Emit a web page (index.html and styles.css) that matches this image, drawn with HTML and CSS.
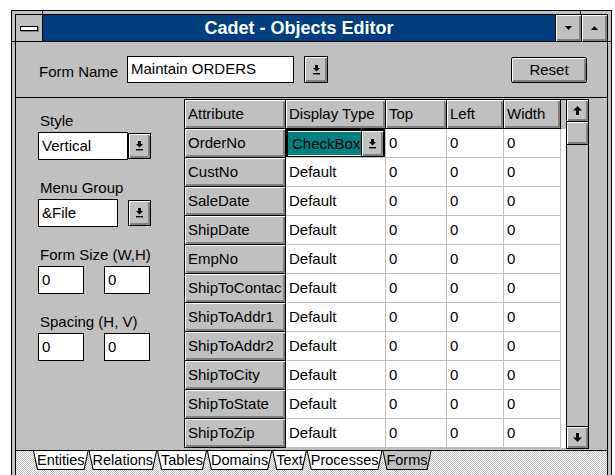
FILE: index.html
```html
<!DOCTYPE html>
<html>
<head>
<meta charset="utf-8">
<title>Cadet - Objects Editor</title>
<link rel="stylesheet" href="styles.css">
</head>
<body>
<div class="window">
  <span class="notch notch-tl"></span>
  <span class="notch notch-tr"></span>
  <span class="notch notch-lt"></span>
  <span class="notch notch-rt"></span>
  <div class="client">
    <div class="titlebar">
      <div class="sysmenu"><span class="sysbar"></span></div>
      <div class="caption">Cadet - Objects Editor</div>
      <div class="tbtn"><svg width="7" height="4" viewBox="0 0 7 4"><polygon points="0,0 7,0 3.5,4" fill="#000"/></svg></div>
      <div class="tbtn"><svg width="7" height="4" viewBox="0 0 7 4"><polygon points="0,4 7,4 3.5,0" fill="#000"/></svg></div>
    </div>

    <div class="formrow">
      <span class="fr-label">Form Name</span>
      <div class="edit fr-edit">Maintain ORDERS</div>
      <div class="ddbtn fr-btn"><svg width="7" height="10" viewBox="0 0 7 10"><rect x="2" y="0" width="3" height="3"/><polygon points="0,3 7,3 3.5,6.5"/><rect x="0" y="8" width="7" height="1.4"/></svg></div>
      <button class="pushbtn">Reset</button>
    </div>

    <div class="main">
      <div class="side">
        <div class="field">
          <div class="flabel">Style</div>
          <div class="combo">
            <div class="edit style-edit">Vertical</div>
            <div class="ddbtn"><svg width="7" height="10" viewBox="0 0 7 10"><rect x="2" y="0" width="3" height="3"/><polygon points="0,3 7,3 3.5,6.5"/><rect x="0" y="8" width="7" height="1.4"/></svg></div>
          </div>
        </div>
        <div class="field">
          <div class="flabel">Menu Group</div>
          <div class="combo">
            <div class="edit menu-edit">&amp;File</div>
            <div class="ddbtn menu-btn"><svg width="7" height="10" viewBox="0 0 7 10"><rect x="2" y="0" width="3" height="3"/><polygon points="0,3 7,3 3.5,6.5"/><rect x="0" y="8" width="7" height="1.4"/></svg></div>
          </div>
        </div>
        <div class="field">
          <div class="flabel">Form Size (W,H)</div>
          <div class="pair">
            <div class="edit small">0</div>
            <div class="edit small">0</div>
          </div>
        </div>
        <div class="field">
          <div class="flabel">Spacing (H, V)</div>
          <div class="pair">
            <div class="edit small">0</div>
            <div class="edit small">0</div>
          </div>
        </div>
      </div>

      <div class="grid">
        <div class="hd">Attribute</div><div class="hd">Display Type</div><div class="hd">Top</div><div class="hd">Left</div><div class="hd">Width</div><div class="fill-hd"></div>

        <div class="hd">OrderNo</div>
        <div class="c sel">
          <div class="cell-combo">
            <div class="teal">CheckBox</div>
            <div class="cell-btn"><svg width="7" height="10" viewBox="0 0 7 10"><rect x="2" y="0" width="3" height="3"/><polygon points="0,3 7,3 3.5,6.5"/><rect x="0" y="8" width="7" height="1.4"/></svg></div>
          </div>
        </div>
        <div class="c">0</div><div class="c">0</div><div class="c">0</div><div class="fill"></div>

        <div class="hd">CustNo</div><div class="c">Default</div><div class="c">0</div><div class="c">0</div><div class="c">0</div><div class="fill"></div>
        <div class="hd">SaleDate</div><div class="c">Default</div><div class="c">0</div><div class="c">0</div><div class="c">0</div><div class="fill"></div>
        <div class="hd">ShipDate</div><div class="c">Default</div><div class="c">0</div><div class="c">0</div><div class="c">0</div><div class="fill"></div>
        <div class="hd">EmpNo</div><div class="c">Default</div><div class="c">0</div><div class="c">0</div><div class="c">0</div><div class="fill"></div>
        <div class="hd">ShipToContac</div><div class="c">Default</div><div class="c">0</div><div class="c">0</div><div class="c">0</div><div class="fill"></div>
        <div class="hd">ShipToAddr1</div><div class="c">Default</div><div class="c">0</div><div class="c">0</div><div class="c">0</div><div class="fill"></div>
        <div class="hd">ShipToAddr2</div><div class="c">Default</div><div class="c">0</div><div class="c">0</div><div class="c">0</div><div class="fill"></div>
        <div class="hd">ShipToCity</div><div class="c">Default</div><div class="c">0</div><div class="c">0</div><div class="c">0</div><div class="fill"></div>
        <div class="hd">ShipToState</div><div class="c">Default</div><div class="c">0</div><div class="c">0</div><div class="c">0</div><div class="fill"></div>
        <div class="hd">ShipToZip</div><div class="c">Default</div><div class="c">0</div><div class="c">0</div><div class="c">0</div><div class="fill"></div>
      </div>

      <div class="vscroll">
        <div class="sb-btn sb-up"><svg width="9" height="9" viewBox="0 0 9 9"><polygon points="4.5,0 9,4.5 6,4.5 6,9 3,9 3,4.5 0,4.5"/></svg></div>
        <div class="sb-thumb"></div>
        <div class="sb-track"></div>
        <div class="sb-btn sb-down"><svg width="9" height="9" viewBox="0 0 9 9"><polygon points="3,0 6,0 6,4.5 9,4.5 4.5,9 0,4.5 3,4.5"/></svg></div>
      </div>
    </div>

    <div class="tabstrip">
      <div class="tab"><span>Entities</span></div>
      <div class="tab"><span>Relations</span></div>
      <div class="tab"><span>Tables</span></div>
      <div class="tab"><span>Domains</span></div>
      <div class="tab"><span>Text</span></div>
      <div class="tab"><span>Processes</span></div>
      <div class="tab active"><span>Forms</span></div>
    </div>
  </div>
</div>
</body>
</html>
```

FILE: styles.css
```css
* { box-sizing: border-box; }

html, body {
  margin: 0;
  padding: 0;
  background: #fff;
  overflow: hidden;
}

body {
  font-family: "Liberation Sans", Arial, sans-serif;
  font-size: 15px;
  color: #000;
}

/* ---- window frame ---- */
.window {
  position: relative;
  margin: 10px 0 0 11px;
  width: 601px;
  height: 490px;
  border: 1px solid #000;
  padding: 3px;
  background: #c0c0c0;
}

.notch { position: absolute; background: #000; }
.notch-tl { left: 30px; top: 0; width: 1px; height: 3px; }
.notch-tr { left: 568px; top: 0; width: 1px; height: 3px; }
.notch-lt { left: 0; top: 30px; width: 3px; height: 1px; }
.notch-rt { right: 0; top: 30px; width: 3px; height: 1px; }

.client {
  height: 100%;
  border: 1px solid #000;
  display: flex;
  flex-direction: column;
  background: #c0c0c0;
}

/* ---- title bar ---- */
.titlebar {
  display: flex;
  height: 27px;
  flex: none;
  border-bottom: 1px solid #000;
}

.sysmenu {
  width: 27px;
  border-right: 1px solid #000;
  background: #c0c0c0;
  display: flex;
  align-items: center;
  justify-content: center;
}

.sysbar {
  display: block;
  width: 18px;
  height: 5px;
  background: #fff;
  border: 1px solid #000;
  box-shadow: 1px 1px 0 #808080;
  margin-top: 1px;
}

.caption {
  flex: 1;
  background: #003f7f;
  color: #fff;
  font-weight: bold;
  font-size: 18px;
  line-height: 26px;
  text-align: center;
}

.tbtn {
  width: 26px;
  border-left: 1px solid #000;
  background: #c0c0c0;
  box-shadow: inset 1px 1px 0 #fff, inset -2px -2px 0 #808080;
  display: flex;
  align-items: center;
  justify-content: center;
}

/* ---- form name row ---- */
.formrow {
  height: 55px;
  flex: none;
  display: flex;
  align-items: center;
  padding-left: 23px;
}

.fr-label { width: 88px; padding-top: 4px; }

.edit {
  background: #fff;
  border: 1px solid #000;
  padding-left: 3px;
  white-space: nowrap;
  overflow: hidden;
}

.fr-edit {
  width: 167px;
  height: 27px;
  line-height: 24px;
}

.ddbtn {
  width: 23px;
  height: 26px;
  background: #c0c0c0;
  border: 1px solid #000;
  box-shadow: inset 1px 1px 0 #fff, inset -2px -2px 0 #808080;
  display: flex;
  align-items: center;
  justify-content: center;
}

.ddbtn svg, .cell-btn svg { fill: #000; }

.fr-btn {
  margin-left: 10px;
  width: 24px;
  height: 27px;
}

.pushbtn {
  margin-left: auto;
  margin-right: 20px;
  width: 76px;
  height: 26px;
  font: inherit;
  color: #000;
  background: #c0c0c0;
  border: 1px solid #000;
  border-radius: 2px;
  box-shadow: inset 1px 1px 0 #fff, inset -2px -2px 0 #808080;
  padding: 0;
}

/* ---- main area ---- */
.main {
  flex: none;
  height: 354px;
  display: flex;
  align-items: flex-start;
  border-top: 1px solid #000;
  border-bottom: 1px solid #000;
}

.side {
  width: 168px;
  flex: none;
  padding: 14px 0 0 22px;
  display: flex;
  flex-direction: column;
  gap: 19px;
}

.flabel {
  height: 17px;
  line-height: 17px;
  padding-left: 2px;
  margin-bottom: 3px;
  white-space: nowrap;
}

.combo {
  display: flex;
  align-items: center;
  height: 28px;
}

.style-edit {
  width: 90px;
  height: 28px;
  line-height: 26px;
}

.menu-edit {
  width: 80px;
  height: 28px;
  line-height: 26px;
}

.menu-btn { margin-left: 10px; }

.pair {
  display: flex;
  gap: 20px;
}

.small {
  width: 46px;
  height: 28px;
  line-height: 26px;
}

/* ---- attribute grid ---- */
.grid {
  flex: none;
  margin-top: 1px;
  display: grid;
  grid-template-columns: 101px 100px 61px 57px 57px 5px;
  grid-auto-rows: 29px;
  border-left: 1px solid #000;
  border-top: 1px solid #000;
  background: #fff;
}

.hd {
  background: #c0c0c0;
  border-right: 1px solid #000;
  border-bottom: 1px solid #000;
  box-shadow: inset 1px 1px 0 #fff, inset -2px -2px 0 #808080;
  padding-left: 3px;
  line-height: 27px;
  white-space: nowrap;
  overflow: hidden;
}

.c {
  background: #fff;
  border-right: 1px solid #c0c0c0;
  border-bottom: 1px solid #c0c0c0;
  padding-left: 3px;
  line-height: 28px;
  white-space: nowrap;
  overflow: hidden;
}

.fill-hd { background: #c0c0c0; }
.fill { background: #fff; }

.c.sel { padding: 0; }

.cell-combo {
  display: flex;
  height: 29px;
  border: 2px solid #000;
}

.teal {
  flex: 1;
  background: #008080;
  margin: 1px 0 1px 0;
  padding-left: 4px;
  line-height: 23px;
  white-space: nowrap;
  overflow: hidden;
}

.cell-btn {
  width: 22px;
  border-left: 1px solid #000;
  background: #c0c0c0;
  box-shadow: inset 1px 1px 0 #fff, inset -2px -2px 0 #808080;
  display: flex;
  align-items: center;
  justify-content: center;
}

/* ---- vertical scroll bar ---- */
.vscroll {
  flex: none;
  margin-top: 1px;
  width: 23px;
  height: 350px;
  border: 1px solid #000;
  display: flex;
  flex-direction: column;
  background: #c0c0c0;
}

.sb-btn {
  flex: none;
  background: #c0c0c0;
  box-shadow: inset 1px 1px 0 #fff, inset -2px -2px 0 #808080;
  display: flex;
  align-items: center;
  justify-content: center;
}

.sb-btn svg { fill: #000; }

.sb-up { border-bottom: 1px solid #000; height: 22px; }
.sb-down { border-top: 1px solid #000; height: 22px; }

.sb-thumb {
  height: 23px;
  flex: none;
  border-bottom: 1px solid #000;
  background: #c0c0c0;
  box-shadow: inset 1px 1px 0 #fff, inset -2px -2px 0 #808080;
}

.sb-track { flex: 1; background: #c0c0c0; }

/* ---- sheet tabs ---- */
.tabstrip {
  flex: 1;
  display: flex;
  align-items: flex-start;
  padding-left: 17px;
  background: repeating-conic-gradient(#c0c0c0 0 25%, #fff 0 50%) 0 0 / 2px 2px;
}

.tab {
  position: relative;
  height: 19px;
  padding: 0 4px;
  font-size: 14.5px;
  line-height: 18px;
  background: #000;
  clip-path: polygon(0 0, 100% 0, calc(100% - 4px) 100%, 4px 100%);
}

.tab::before {
  content: "";
  position: absolute;
  left: 1px;
  right: 1px;
  top: 0;
  bottom: 1px;
  background: #fff;
  clip-path: polygon(0 0, 100% 0, calc(100% - 4px) 100%, 4px 100%);
}

.tab.active::before { background: #c0c0c0; }

.tab span { position: relative; }
```
